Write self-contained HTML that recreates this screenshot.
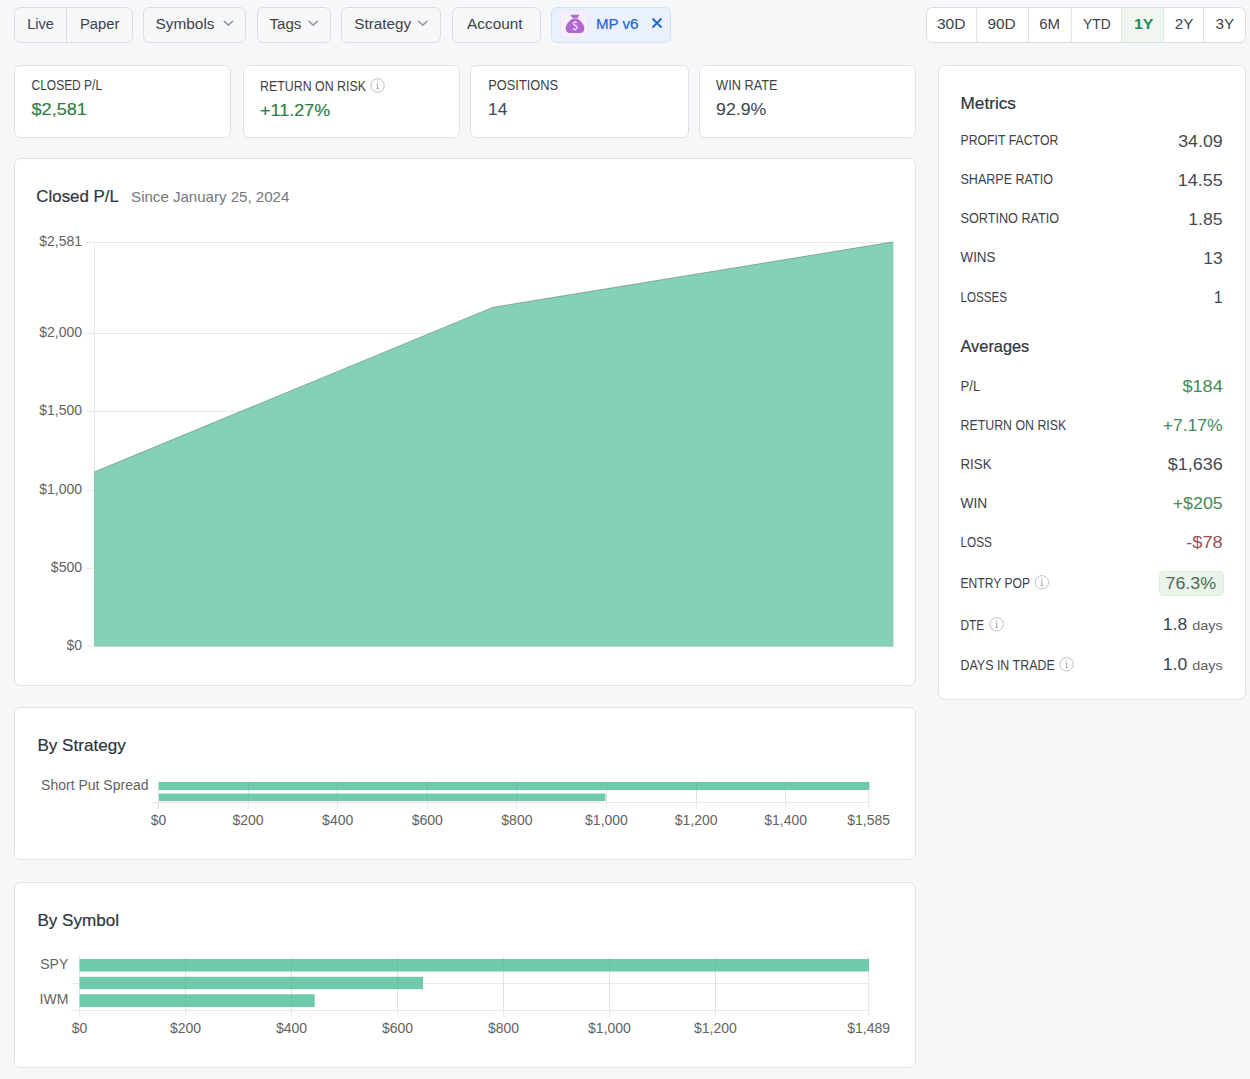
<!DOCTYPE html>
<html><head><meta charset="utf-8">
<style>
html,body{margin:0;padding:0;width:1250px;height:1079px;overflow:hidden;background:#f6f7f9}
svg{display:block;font-family:"Liberation Sans",sans-serif}
</style></head><body>
<svg width="1250" height="1079" viewBox="0 0 1250 1079">
<rect x="14.5" y="7.5" width="118" height="35" rx="6" fill="#f6f7f9" stroke="#dadde2"/>
<line x1="66.5" y1="7.5" x2="66.5" y2="42" stroke="#dadde2"/>
<text x="27.3" y="29" font-size="14" fill="#3d424a" textLength="26.6" lengthAdjust="spacingAndGlyphs" >Live</text>
<text x="80" y="29" font-size="14" fill="#3d424a" textLength="39.4" lengthAdjust="spacingAndGlyphs" >Paper</text>
<rect x="143.5" y="7.5" width="102" height="35" rx="6" fill="#f6f7f9" stroke="#dadde2"/>
<text x="155.5" y="29" font-size="14" fill="#3d424a" textLength="59" lengthAdjust="spacingAndGlyphs" >Symbols</text>
<rect x="257.5" y="7.5" width="73" height="35" rx="6" fill="#f6f7f9" stroke="#dadde2"/>
<text x="269.5" y="29" font-size="14" fill="#3d424a" textLength="31.9" lengthAdjust="spacingAndGlyphs" >Tags</text>
<rect x="341.5" y="7.5" width="99" height="35" rx="6" fill="#f6f7f9" stroke="#dadde2"/>
<text x="354.3" y="29" font-size="14" fill="#3d424a" textLength="56.7" lengthAdjust="spacingAndGlyphs" >Strategy</text>
<rect x="452.5" y="7.5" width="88" height="35" rx="6" fill="#f6f7f9" stroke="#dadde2"/>
<text x="467.1" y="29" font-size="14" fill="#3d424a" textLength="55.4" lengthAdjust="spacingAndGlyphs" >Account</text>
<path d="M224.20000000000002 21.200000000000003 L228.4 25.1 L232.6 21.200000000000003" fill="none" stroke="#92969c" stroke-width="1.5" stroke-linecap="round" stroke-linejoin="round"/>
<path d="M309.0 21.200000000000003 L313.2 25.1 L317.4 21.200000000000003" fill="none" stroke="#92969c" stroke-width="1.5" stroke-linecap="round" stroke-linejoin="round"/>
<path d="M418.6 21.200000000000003 L422.8 25.1 L427.0 21.200000000000003" fill="none" stroke="#92969c" stroke-width="1.5" stroke-linecap="round" stroke-linejoin="round"/>
<rect x="551.5" y="7.5" width="119" height="35" rx="6" fill="#e8f1fd" stroke="#d3e1f7"/>
<rect x="560.5" y="10" width="28" height="28" rx="4" fill="#f5effc" stroke="#efe6f8"/>
<g fill="#b067d1"><path d="M571 14.8 H579.2 Q579.6 15 579.2 15.6 L577.2 18.2 H572.9 L570.8 15.6 Q570.5 15 571 14.8 Z"/><path d="M572.6 18.8 H577.4 C581.5 21 584.3 25 584.3 28.8 C584.3 31.5 582.8 33 580.2 33 H569.8 C567.2 33 565.7 31.5 565.7 28.8 C565.7 25 568.5 21 572.6 18.8 Z"/></g>
<path d="M577 22.6 C576 21.8 573.2 21.8 573.2 23.6 C573.2 25.6 577.2 25.2 577.2 27.6 C577.2 29.6 574 29.8 572.8 28.8 M575.1 21 V22 M575.1 29.4 V30.4" fill="none" stroke="#f3e9fb" stroke-width="1.2"/>
<text x="596" y="29" font-size="14" fill="#2463d3" textLength="42.5" lengthAdjust="spacingAndGlyphs" stroke="#2463d3" stroke-width="0.2" >MP v6</text>
<path d="M652.5 18.5 L661.5 27.5 M661.5 18.5 L652.5 27.5" stroke="#2a64d5" stroke-width="1.9"/>
<rect x="926.5" y="7.5" width="319" height="35" rx="6" fill="#fff" stroke="#dadde2"/>
<rect x="1122" y="8" width="41" height="34" fill="#eff7f0"/>
<line x1="976.5" y1="7.5" x2="976.5" y2="42" stroke="#e3e5e9"/>
<line x1="1028.5" y1="7.5" x2="1028.5" y2="42" stroke="#e3e5e9"/>
<line x1="1071.5" y1="7.5" x2="1071.5" y2="42" stroke="#e3e5e9"/>
<line x1="1121.5" y1="7.5" x2="1121.5" y2="42" stroke="#e3e5e9"/>
<line x1="1163.5" y1="7.5" x2="1163.5" y2="42" stroke="#e3e5e9"/>
<line x1="1203.5" y1="7.5" x2="1203.5" y2="42" stroke="#e3e5e9"/>
<text x="936.9" y="29" font-size="14" fill="#3d424a" textLength="28.5" lengthAdjust="spacingAndGlyphs" >30D</text>
<text x="987.5" y="29" font-size="14" fill="#3d424a" textLength="28.2" lengthAdjust="spacingAndGlyphs" >90D</text>
<text x="1039.2" y="29" font-size="14" fill="#3d424a" textLength="20.7" lengthAdjust="spacingAndGlyphs" >6M</text>
<text x="1082.9" y="29" font-size="14" fill="#3d424a" textLength="27.8" lengthAdjust="spacingAndGlyphs" >YTD</text>
<text x="1174.7" y="29" font-size="14" fill="#3d424a" textLength="18.7" lengthAdjust="spacingAndGlyphs" >2Y</text>
<text x="1215.5" y="29" font-size="14" fill="#3d424a" textLength="18.7" lengthAdjust="spacingAndGlyphs" >3Y</text>
<text x="1133.9" y="29" font-size="14" fill="#23895a" textLength="19.4" lengthAdjust="spacingAndGlyphs" font-weight="bold" >1Y</text>
<rect x="14.5" y="65.5" width="216" height="72" rx="6" fill="#fff" stroke="#e0e2e7"/>
<rect x="243.5" y="65.5" width="216" height="72" rx="6" fill="#fff" stroke="#e0e2e7"/>
<rect x="470.5" y="65.5" width="218" height="72" rx="6" fill="#fff" stroke="#e0e2e7"/>
<rect x="699.5" y="65.5" width="216" height="72" rx="6" fill="#fff" stroke="#e0e2e7"/>
<text x="31.5" y="89.6" font-size="14" fill="#3d424a" textLength="70.6" lengthAdjust="spacingAndGlyphs" >CLOSED P/L</text>
<text x="31.5" y="114.8" font-size="15.6" fill="#2f7c47" textLength="55.4" lengthAdjust="spacingAndGlyphs" stroke="#2f7c47" stroke-width="0.15" >$2,581</text>
<text x="260.1" y="90.5" font-size="14" fill="#3d424a" textLength="105.8" lengthAdjust="spacingAndGlyphs" >RETURN ON RISK</text>
<circle cx="377.6" cy="85.5" r="6.7" fill="none" stroke="#bfc2c7" stroke-width="1"/>
<path d="M377.6 83.9 V88.5 M376.3 88.7 H378.90000000000003 M376.40000000000003 84.0 H377.6 M377.6 81.3 V82.5" stroke="#a9acb1" stroke-width="1"/>
<text x="260.1" y="115.8" font-size="15.6" fill="#2f7c47" textLength="70" lengthAdjust="spacingAndGlyphs" stroke="#2f7c47" stroke-width="0.15" >+11.27%</text>
<text x="488.3" y="89.6" font-size="14" fill="#3d424a" textLength="69.8" lengthAdjust="spacingAndGlyphs" >POSITIONS</text>
<text x="488.1" y="114.8" font-size="15.6" fill="#40454d" textLength="19.2" lengthAdjust="spacingAndGlyphs" >14</text>
<text x="716.1" y="89.6" font-size="14" fill="#3d424a" textLength="61.4" lengthAdjust="spacingAndGlyphs" >WIN RATE</text>
<text x="716.1" y="114.8" font-size="15.6" fill="#40454d" textLength="50.2" lengthAdjust="spacingAndGlyphs" >92.9%</text>
<rect x="938.5" y="65.5" width="307" height="634" rx="6" fill="#fff" stroke="#e0e2e7"/>
<text x="960.5" y="108.6" font-size="17" fill="#30353d" textLength="55.4" lengthAdjust="spacingAndGlyphs" stroke="#30353d" stroke-width="0.2" >Metrics</text>
<text x="960.5" y="145" font-size="14" fill="#3d424a" textLength="97.8" lengthAdjust="spacingAndGlyphs" >PROFIT FACTOR</text>
<text x="1222.7" y="146.5" font-size="15.6" fill="#454a52" text-anchor="end" textLength="44.5" lengthAdjust="spacingAndGlyphs" >34.09</text>
<text x="960.5" y="184.2" font-size="14" fill="#3d424a" textLength="92.4" lengthAdjust="spacingAndGlyphs" >SHARPE RATIO</text>
<text x="1222.7" y="185.5" font-size="15.6" fill="#454a52" text-anchor="end" textLength="45" lengthAdjust="spacingAndGlyphs" >14.55</text>
<text x="960.5" y="223.2" font-size="14" fill="#3d424a" textLength="98.7" lengthAdjust="spacingAndGlyphs" >SORTINO RATIO</text>
<text x="1222.7" y="224.5" font-size="15.6" fill="#454a52" text-anchor="end" textLength="34.4" lengthAdjust="spacingAndGlyphs" >1.85</text>
<text x="960.5" y="262.4" font-size="14" fill="#3d424a" textLength="35" lengthAdjust="spacingAndGlyphs" >WINS</text>
<text x="1222.7" y="263.5" font-size="15.6" fill="#454a52" text-anchor="end" textLength="19.4" lengthAdjust="spacingAndGlyphs" >13</text>
<text x="960.5" y="301.5" font-size="14" fill="#3d424a" textLength="46.5" lengthAdjust="spacingAndGlyphs" >LOSSES</text>
<text x="1222.7" y="302.5" font-size="15.6" fill="#454a52" text-anchor="end" textLength="8.9" lengthAdjust="spacingAndGlyphs" >1</text>
<text x="960.5" y="352" font-size="17" fill="#30353d" textLength="68.8" lengthAdjust="spacingAndGlyphs" stroke="#30353d" stroke-width="0.2" >Averages</text>
<text x="960.5" y="391" font-size="14" fill="#3d424a" textLength="19.7" lengthAdjust="spacingAndGlyphs" >P/L</text>
<text x="1222.7" y="391.8" font-size="15.6" fill="#44895a" text-anchor="end" textLength="40.2" lengthAdjust="spacingAndGlyphs" >$184</text>
<text x="960.5" y="429.6" font-size="14" fill="#3d424a" textLength="105.8" lengthAdjust="spacingAndGlyphs" >RETURN ON RISK</text>
<text x="1222.7" y="430.8" font-size="15.6" fill="#44895a" text-anchor="end" textLength="60" lengthAdjust="spacingAndGlyphs" >+7.17%</text>
<text x="960.5" y="468.9" font-size="14" fill="#3d424a" textLength="31" lengthAdjust="spacingAndGlyphs" >RISK</text>
<text x="1222.7" y="469.8" font-size="15.6" fill="#454a52" text-anchor="end" textLength="54.9" lengthAdjust="spacingAndGlyphs" >$1,636</text>
<text x="960.5" y="508" font-size="14" fill="#3d424a" textLength="26.7" lengthAdjust="spacingAndGlyphs" >WIN</text>
<text x="1222.7" y="509" font-size="15.6" fill="#44895a" text-anchor="end" textLength="50" lengthAdjust="spacingAndGlyphs" >+$205</text>
<text x="960.5" y="546.8" font-size="14" fill="#3d424a" textLength="31.5" lengthAdjust="spacingAndGlyphs" >LOSS</text>
<text x="1222.7" y="548" font-size="15.6" fill="#9a4f4f" text-anchor="end" textLength="36.5" lengthAdjust="spacingAndGlyphs" >-$78</text>
<text x="960.5" y="587.6" font-size="14" fill="#3d424a" textLength="69.6" lengthAdjust="spacingAndGlyphs" >ENTRY POP</text>
<circle cx="1041.9" cy="582.3" r="6.7" fill="none" stroke="#bfc2c7" stroke-width="1"/>
<path d="M1041.9 580.6999999999999 V585.3 M1040.6000000000001 585.5 H1043.2 M1040.7 580.8 H1041.9 M1041.9 578.0999999999999 V579.3" stroke="#a9acb1" stroke-width="1"/>
<rect x="1159.5" y="571.5" width="64" height="24" rx="4" fill="#eaf4eb" stroke="#dcebdd"/>
<text x="1165.5" y="588.9" font-size="15.6" fill="#4d6b55" textLength="50.6" lengthAdjust="spacingAndGlyphs" >76.3%</text>
<text x="960.5" y="629.6" font-size="14" fill="#3d424a" textLength="23.8" lengthAdjust="spacingAndGlyphs" >DTE</text>
<circle cx="996.7" cy="624.3" r="6.7" fill="none" stroke="#bfc2c7" stroke-width="1"/>
<path d="M996.7 622.6999999999999 V627.3 M995.4000000000001 627.5 H998.0 M995.5 622.8 H996.7 M996.7 620.0999999999999 V621.3" stroke="#a9acb1" stroke-width="1"/>
<text x="1162.8" y="629.5" font-size="16" fill="#3d424a" textLength="24.4" lengthAdjust="spacingAndGlyphs" >1.8</text>
<text x="1192.3" y="630.2" font-size="13" fill="#5c6169" textLength="30.5" lengthAdjust="spacingAndGlyphs" >days</text>
<text x="960.5" y="669.5" font-size="14" fill="#3d424a" textLength="94.2" lengthAdjust="spacingAndGlyphs" >DAYS IN TRADE</text>
<circle cx="1066.6" cy="664.3" r="6.7" fill="none" stroke="#bfc2c7" stroke-width="1"/>
<path d="M1066.6 662.6999999999999 V667.3 M1065.3 667.5 H1067.8999999999999 M1065.3999999999999 662.8 H1066.6 M1066.6 660.0999999999999 V661.3" stroke="#a9acb1" stroke-width="1"/>
<text x="1162.8" y="669.6" font-size="16" fill="#3d424a" textLength="24.4" lengthAdjust="spacingAndGlyphs" >1.0</text>
<text x="1192.3" y="670.3" font-size="13" fill="#5c6169" textLength="30.5" lengthAdjust="spacingAndGlyphs" >days</text>
<rect x="14.5" y="158.5" width="901" height="527" rx="6" fill="#fff" stroke="#e0e2e7"/>
<text x="36.3" y="202.4" font-size="17" fill="#30353d" textLength="82.6" lengthAdjust="spacingAndGlyphs" stroke="#30353d" stroke-width="0.2" >Closed P/L</text>
<text x="131.1" y="202.4" font-size="15" fill="#737880" textLength="158.2" lengthAdjust="spacingAndGlyphs" >Since January 25, 2024</text>
<line x1="86" y1="242.5" x2="893" y2="242.5" stroke="#e9e9e9"/>
<text x="82" y="246" font-size="14" fill="#636363" text-anchor="end" >$2,581</text>
<line x1="86" y1="333.5" x2="893" y2="333.5" stroke="#e9e9e9"/>
<text x="82" y="337" font-size="14" fill="#636363" text-anchor="end" >$2,000</text>
<line x1="86" y1="411.5" x2="893" y2="411.5" stroke="#e9e9e9"/>
<text x="82" y="415" font-size="14" fill="#636363" text-anchor="end" >$1,500</text>
<line x1="86" y1="490.5" x2="893" y2="490.5" stroke="#e9e9e9"/>
<text x="82" y="494" font-size="14" fill="#636363" text-anchor="end" >$1,000</text>
<line x1="86" y1="568.5" x2="893" y2="568.5" stroke="#e9e9e9"/>
<text x="82" y="572" font-size="14" fill="#636363" text-anchor="end" >$500</text>
<line x1="86" y1="646.5" x2="893" y2="646.5" stroke="#e9e9e9"/>
<text x="82" y="650" font-size="14" fill="#636363" text-anchor="end" >$0</text>
<line x1="94.5" y1="242" x2="94.5" y2="647" stroke="#e9e9e9"/>
<path d="M94 472 L493 307.2 L893.4 241.8 L893.4 646.5 L94 646.5 Z" fill="rgb(110,200,173)" fill-opacity="0.85"/>
<path d="M94 472 L493 307.2 L893.4 241.8" fill="none" stroke="rgba(0,0,0,0.25)" stroke-width="1"/>
<rect x="14.5" y="707.5" width="901" height="152" rx="6" fill="#fff" stroke="#e0e2e7"/>
<text x="37.4" y="750.5" font-size="17" fill="#30353d" textLength="88.3" lengthAdjust="spacingAndGlyphs" stroke="#30353d" stroke-width="0.2" >By Strategy</text>
<text x="148.5" y="789.7" font-size="14" fill="#636363" text-anchor="end" >Short Put Spread</text>
<line x1="158.5" y1="781" x2="158.5" y2="809" stroke="#e9e9e9"/>
<text x="158.5" y="825" font-size="14" fill="#636363" text-anchor="middle" >$0</text>
<line x1="248.5" y1="781" x2="248.5" y2="809" stroke="#e9e9e9"/>
<text x="248.1" y="825" font-size="14" fill="#636363" text-anchor="middle" >$200</text>
<line x1="337.5" y1="781" x2="337.5" y2="809" stroke="#e9e9e9"/>
<text x="337.7" y="825" font-size="14" fill="#636363" text-anchor="middle" >$400</text>
<line x1="427.5" y1="781" x2="427.5" y2="809" stroke="#e9e9e9"/>
<text x="427.3" y="825" font-size="14" fill="#636363" text-anchor="middle" >$600</text>
<line x1="516.5" y1="781" x2="516.5" y2="809" stroke="#e9e9e9"/>
<text x="516.9" y="825" font-size="14" fill="#636363" text-anchor="middle" >$800</text>
<line x1="606.5" y1="781" x2="606.5" y2="809" stroke="#e9e9e9"/>
<text x="606.5" y="825" font-size="14" fill="#636363" text-anchor="middle" >$1,000</text>
<line x1="696.5" y1="781" x2="696.5" y2="809" stroke="#e9e9e9"/>
<text x="696.1" y="825" font-size="14" fill="#636363" text-anchor="middle" >$1,200</text>
<line x1="785.5" y1="781" x2="785.5" y2="809" stroke="#e9e9e9"/>
<text x="785.7" y="825" font-size="14" fill="#636363" text-anchor="middle" >$1,400</text>
<line x1="868.5" y1="781" x2="868.5" y2="809" stroke="#e9e9e9"/>
<text x="868.6" y="825" font-size="14" fill="#636363" text-anchor="middle" >$1,585</text>
<line x1="152" y1="802.5" x2="869" y2="802.5" stroke="#e9e9e9"/>
<line x1="158.5" y1="781" x2="158.5" y2="809" stroke="#dedede"/>
<rect x="159" y="782" width="710.4" height="8" fill="#6ec9ad"/>
<rect x="159" y="793.5" width="446.5" height="7.5" fill="#6ec9ad"/>
<line x1="248.5" y1="782" x2="248.5" y2="801" stroke="rgba(0,0,0,0.035)"/>
<line x1="337.5" y1="782" x2="337.5" y2="801" stroke="rgba(0,0,0,0.035)"/>
<line x1="427.5" y1="782" x2="427.5" y2="801" stroke="rgba(0,0,0,0.035)"/>
<line x1="516.5" y1="782" x2="516.5" y2="801" stroke="rgba(0,0,0,0.035)"/>
<line x1="606.5" y1="782" x2="606.5" y2="801" stroke="rgba(0,0,0,0.035)"/>
<line x1="696.5" y1="782" x2="696.5" y2="801" stroke="rgba(0,0,0,0.035)"/>
<line x1="785.5" y1="782" x2="785.5" y2="801" stroke="rgba(0,0,0,0.035)"/>
<rect x="14.5" y="882.5" width="901" height="185" rx="6" fill="#fff" stroke="#e0e2e7"/>
<text x="37.4" y="925.7" font-size="17" fill="#30353d" textLength="81.6" lengthAdjust="spacingAndGlyphs" stroke="#30353d" stroke-width="0.2" >By Symbol</text>
<text x="68.3" y="969.2" font-size="14" fill="#636363" text-anchor="end" >SPY</text>
<text x="68.3" y="1004.3" font-size="14" fill="#636363" text-anchor="end" >IWM</text>
<line x1="79.5" y1="956" x2="79.5" y2="1016" stroke="#e9e9e9"/>
<text x="79.5" y="1032.6" font-size="14" fill="#636363" text-anchor="middle" >$0</text>
<line x1="185.5" y1="956" x2="185.5" y2="1016" stroke="#e9e9e9"/>
<text x="185.5" y="1032.6" font-size="14" fill="#636363" text-anchor="middle" >$200</text>
<line x1="291.5" y1="956" x2="291.5" y2="1016" stroke="#e9e9e9"/>
<text x="291.5" y="1032.6" font-size="14" fill="#636363" text-anchor="middle" >$400</text>
<line x1="397.5" y1="956" x2="397.5" y2="1016" stroke="#e9e9e9"/>
<text x="397.5" y="1032.6" font-size="14" fill="#636363" text-anchor="middle" >$600</text>
<line x1="503.5" y1="956" x2="503.5" y2="1016" stroke="#e9e9e9"/>
<text x="503.5" y="1032.6" font-size="14" fill="#636363" text-anchor="middle" >$800</text>
<line x1="609.5" y1="956" x2="609.5" y2="1016" stroke="#e9e9e9"/>
<text x="609.5" y="1032.6" font-size="14" fill="#636363" text-anchor="middle" >$1,000</text>
<line x1="715.5" y1="956" x2="715.5" y2="1016" stroke="#e9e9e9"/>
<text x="715.4" y="1032.6" font-size="14" fill="#636363" text-anchor="middle" >$1,200</text>
<line x1="868.5" y1="956" x2="868.5" y2="1016" stroke="#e9e9e9"/>
<text x="868.6" y="1032.6" font-size="14" fill="#636363" text-anchor="middle" >$1,489</text>
<line x1="71" y1="983.5" x2="869" y2="983.5" stroke="#e9e9e9"/>
<line x1="71" y1="1010.5" x2="869" y2="1010.5" stroke="#e9e9e9"/>
<rect x="79.5" y="959" width="789.5" height="12.5" fill="#6ec9ad"/>
<rect x="79.5" y="976.8" width="343.5" height="12.3" fill="#6ec9ad"/>
<rect x="79.5" y="994.3" width="235.2" height="12.7" fill="#6ec9ad"/>
<line x1="185.5" y1="959" x2="185.5" y2="1007" stroke="rgba(0,0,0,0.035)"/>
<line x1="291.5" y1="959" x2="291.5" y2="1007" stroke="rgba(0,0,0,0.035)"/>
<line x1="397.5" y1="959" x2="397.5" y2="1007" stroke="rgba(0,0,0,0.035)"/>
<line x1="503.5" y1="959" x2="503.5" y2="1007" stroke="rgba(0,0,0,0.035)"/>
<line x1="609.5" y1="959" x2="609.5" y2="1007" stroke="rgba(0,0,0,0.035)"/>
<line x1="715.5" y1="959" x2="715.5" y2="1007" stroke="rgba(0,0,0,0.035)"/>
</svg>
</body></html>
